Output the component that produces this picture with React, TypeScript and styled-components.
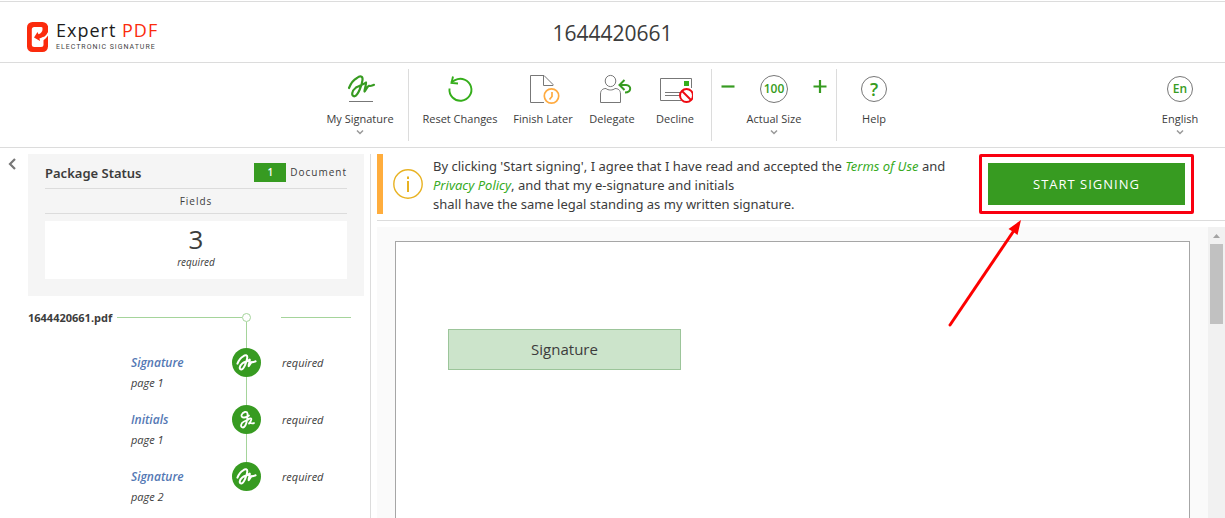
import React from "react";
import styled, { createGlobalStyle } from "styled-components";

const GlobalStyle = createGlobalStyle`
  *, *::before, *::after { box-sizing: border-box; }
  body {
    margin: 0;
    background: #fff;
    color: #3c3c3c;
    font-family: "Open Sans", "Noto Sans", sans-serif;
    font-size: 12px;
  }
  button { font: inherit; color: inherit; border: 0; padding: 0; background: none; cursor: pointer; }
  h1, h2, p, ul { margin: 0; padding: 0; font-weight: 400; }
  ul { list-style: none; }
  svg { display: block; }
`;

const green = "#379b21";
const line = "#dcdcdc";
const rail = "#a5d49b";
const textFont = `"Noto Sans", "Open Sans", sans-serif`;

const Screen = styled.div`
  display: flex;
  flex-direction: column;
  height: 100vh;
  padding-top: 1px;
`;

const Header = styled.header`
  display: grid;
  grid-template-columns: 1fr auto 1fr;
  align-items: center;
  height: 62px;
  flex: none;
  padding: 0 27px;
  border-top: 1px solid ${line};
  border-bottom: 1px solid ${line};
`;

const Title = styled.h1`
  padding-top: 2px;
  font-size: 21px;
  line-height: 28px;
`;

const Brand = styled.a`
  display: flex;
  align-items: center;
  gap: 8px;
  padding-top: 10px;
  color: #1c1c1c;
  text-decoration: none;
`;

const BrandName = styled.span`
  display: block;
  font-size: 18px;
  line-height: 20px;
  letter-spacing: 1px;
`;

const BrandAccent = styled.span`
  color: #fb2b0d;
`;

const BrandTagline = styled.span`
  display: block;
  font: 400 7px/14px Roboto, sans-serif;
  letter-spacing: 1px;
  color: #444;
`;

const Toolbar = styled.nav`
  display: grid;
  grid-template-columns: 1fr auto 1fr;
  height: 85px;
  flex: none;
  border-bottom: 1px solid ${line};
`;

const ToolGroups = styled.div`
  grid-column: 2;
  display: flex;
  padding: 6px 2px 6px 0;
`;

const ToolGroup = styled.div<{ $pad?: number }>`
  display: flex;
  padding: 0 ${(p) => p.$pad ?? 0}px;
  & + & { border-left: 1px solid ${line}; }
`;

const ToolButton = styled.button<{ $width: number }>`
  display: flex;
  flex-direction: column;
  align-items: center;
  justify-content: flex-start;
  width: ${(p) => p.$width}px;
  padding-top: 2px;
`;

const ToolLabel = styled.span`
  margin: 4px 0 1px;
  font-size: 11px;
  line-height: 16px;
  white-space: nowrap;
`;

const LanguageSlot = styled.div`
  justify-self: end;
  display: flex;
  padding: 6px 8px;
`;

const IconBox = styled.span`
  display: flex;
  align-items: center;
  justify-content: center;
  width: 36px;
  height: 36px;
`;

const RoundIcon = styled.span<{ $size: number; $text: number }>`
  display: flex;
  align-items: center;
  justify-content: center;
  width: ${(p) => p.$size}px;
  height: ${(p) => p.$size}px;
  border: 1px solid #777;
  border-radius: 50%;
  color: ${green};
  font-size: ${(p) => p.$text}px;
  line-height: 16px;
  font-weight: 600;
`;

const StepButton = styled.button`
  display: flex;
  align-items: center;
  justify-content: center;
  width: 16px;
  height: 36px;
`;

const Body = styled.div`
  display: flex;
  flex: 1;
  min-height: 0;
  padding-top: 6px;
`;

const Sidebar = styled.aside`
  display: flex;
  flex: none;
  width: 371px;
  padding-right: 6px;
  border-right: 1px solid ${line};
`;

const CollapseButton = styled.button`
  display: flex;
  justify-content: center;
  width: 28px;
  height: 20px;
  padding: 4px 4px 0 0;
`;

const SidebarContent = styled.div`
  flex: 1;
  min-width: 0;
`;

const StatusPanel = styled.section`
  height: 142px;
  padding: 0 17px;
  background: #f5f5f5;
`;

const StatusHead = styled.div`
  display: flex;
  align-items: center;
  height: 35px;
  padding-top: 3px;
  border-bottom: 1px solid ${line};
`;

const StatusTitle = styled.h2`
  flex: 1;
  font-family: ${textFont};
  font-size: 13px;
  line-height: 20px;
  font-weight: 600;
`;

const Count = styled.span`
  width: 32px;
  margin-right: 4px;
  background: ${green};
  color: #fff;
  font-size: 10px;
  line-height: 19px;
  font-weight: 600;
  text-align: center;
`;

const SpacedText = styled.span`
  font-size: 10px;
  line-height: 19px;
  letter-spacing: 1px;
`;

const FieldsHead = styled.div`
  display: flex;
  align-items: center;
  justify-content: center;
  height: 25px;
  border-bottom: 1px solid ${line};
`;

const FieldsCard = styled.div`
  display: flex;
  flex-direction: column;
  align-items: center;
  height: 58px;
  margin-top: 7px;
  padding-top: 1px;
  background: #fff;
`;

const FieldsNumber = styled.span`
  font-size: 26px;
  line-height: 34px;
`;

const FieldsState = styled.em`
  font-size: 10px;
  line-height: 12px;
`;

const Required = styled.em`
  font-size: 11px;
  line-height: 18px;
`;

const FileRow = styled.div`
  display: grid;
  grid-template-columns: 204px 29px 1fr;
  grid-template-rows: 12px auto 22px;
  grid-auto-flow: column;
`;

const FileName = styled.div`
  grid-area: 2 / 1;
  display: flex;
  align-items: center;
  gap: 5px;
  height: 18px;
  font-size: 11px;
  font-weight: 700;
`;

const Rule = styled.span`
  flex: 1;
  height: 1px;
  background: ${rail};
`;

const NodeRail = styled.div`
  grid-area: 2 / 2 / 4 / 2;
  display: grid;
  grid-template-columns: 1fr 9px 1fr;
  grid-template-rows: 5px 9px 1fr;
  align-items: center;
`;

const NodeRule = styled.span`
  grid-area: 2 / 1;
  height: 1px;
  background: ${rail};
`;

const NodeDot = styled.span`
  grid-area: 2 / 2;
  height: 9px;
  border: 1px solid ${rail};
  border-radius: 50%;
`;

const NodeStem = styled.span`
  grid-area: 3 / 2;
  align-self: stretch;
  justify-self: center;
  width: 1px;
  background: ${rail};
`;

const FileTail = styled.div`
  grid-area: 2 / 3;
  display: flex;
  align-items: center;
  height: 18px;
  padding: 0 13px 0 20px;
`;

const FieldRow = styled.li`
  display: grid;
  grid-template-columns: 204px 29px 1fr;
  height: 57px;
`;

const Stem = styled.span`
  display: block;
  width: 1px;
  height: 28px;
  margin: 0 auto;
  background: ${rail};
`;

const FieldInfo = styled.div`
  display: flex;
  flex-direction: column;
  align-items: flex-start;
  gap: 2px;
  padding: 6px 0 0 103px;
  font-size: 11px;
  line-height: 18px;
  font-style: italic;
  white-space: nowrap;
`;

const FieldLink = styled.a`
  color: #5478b4;
  font-size: 12px;
  font-weight: 600;
  text-decoration: none;
`;

const FieldMark = styled.span`
  display: flex;
  align-items: center;
  justify-content: center;
  width: 29px;
  height: 29px;
  border-radius: 50%;
  background: ${green};
  color: #fff;
`;

const FieldState = styled.div`
  padding: 6px 0 0 21px;
`;

const Main = styled.main`
  display: flex;
  flex-direction: column;
  flex: 1;
  min-width: 0;
  padding-left: 6px;
`;

const Notice = styled.section`
  display: flex;
  justify-content: space-between;
  flex: none;
  padding: 0 31px 6px 0;
  border-bottom: 1px solid ${line};
`;

const NoticeMessage = styled.div`
  display: flex;
  align-items: center;
  gap: 10px;
  padding-left: 10px;
  border-left: 6px solid #ffad3d;
`;

const NoticeText = styled.p`
  padding-top: 2px;
  font-family: ${textFont};
  font-size: 13px;
  line-height: 19px;
  white-space: nowrap;
`;

const PolicyLink = styled.a`
  color: #38ab1f;
  font-style: italic;
  text-decoration: none;
`;

const Highlight = styled.div`
  position: relative;
  flex: none;
  padding: 6px;
  border: 3px solid #f90010;
  border-radius: 2px;
`;

const StartButton = styled.button`
  display: block;
  width: 197px;
  height: 42px;
  background: ${green};
  color: #fff;
  font-size: 13px;
  letter-spacing: 1px;
`;

const Pointer = styled.svg`
  position: absolute;
  left: -36px;
  top: 61px;
  pointer-events: none;
`;

const Viewer = styled.section`
  display: flex;
  flex: 1;
  min-height: 0;
  margin-top: 6px;
  background: #fafafa;
`;

const Pages = styled.div`
  flex: 1;
  min-width: 0;
  padding: 14px 18px 0;
  overflow: hidden;
`;

const Page = styled.article`
  min-height: 100vh;
  padding: 87px 52px;
  border: 1px solid #a6a6a6;
  background: #fff;
`;

const SignatureField = styled.button`
  display: block;
  width: 233px;
  height: 41px;
  border: 1px solid #9cc59a;
  background: #cce4cb;
  font-size: 15px;
  line-height: 20px;
  padding-bottom: 2px;
`;

const ScrollTrack = styled.div`
  width: 17px;
  padding: 6px 2px;
  background: #f1f1f1;
`;

const ScrollThumb = styled.div`
  height: 80px;
  margin-top: 6px;
  background: #c1c1c1;
`;

const SIGNATURE =
  "M7 17C9 12 12 8.5 15 7C18 4.5 21 5 20.5 9C20 14 16 24.5 12.5 25.3C9 25.3 9.5 20 14 16.5C17 14.5 21 14 24 11.5C24.5 14 22 19 22.5 20.5C23.5 20 25 15.5 27 14.8C28.5 15.5 29.5 14.8 32 13.8";

const Chevron = () => (
  <svg width="8" height="8" viewBox="0 0 8 8" fill="none" stroke="#999" strokeWidth="1.5">
    <path d="M1 2.500L4 5.500L7 2.500" />
  </svg>
);

const SignatureIcon = () => (
  <svg width="36" height="36" viewBox="0 0 36 36" fill="none">
    <path d={SIGNATURE} stroke={green} strokeWidth="2.2" strokeLinecap="round" strokeLinejoin="round" />
    <path d="M7 30.5H31" stroke="#777" />
  </svg>
);

const ResetIcon = () => (
  <svg width="36" height="36" viewBox="0 0 36 36" fill="none" stroke="#35ae1b" strokeWidth="1.9">
    <path d="M7.500 17.500A11 11 0 1 0 13 9.200L9 11.500" />
    <path d="M11 5.500L9.500 12L16 12.500" />
  </svg>
);

const FinishIcon = () => (
  <svg width="36" height="36" viewBox="0 0 36 36" fill="none" stroke="#777">
    <path d="M19 31.500H5.500V4.500H19L28 13.500V14.500H18.500V4.500" />
    <circle cx="26.500" cy="25" r="7.2" stroke="#ffab40" strokeWidth="1.7" fill="#fff" />
    <path d="M27 21V25.500L24.500 28.500" stroke="#ffab40" strokeWidth="1.7" />
  </svg>
);

const DelegateIcon = () => (
  <svg width="36" height="36" viewBox="0 0 36 36" fill="none" stroke="#777" overflow="visible">
    <ellipse cx="16.500" cy="10" rx="5.3" ry="5.6" />
    <path d="M6.500 31.500V23C6.500 19 9 17.500 12 17.500C14 19.500 19 19.500 21 17.500C24 17.500 26.500 19 26.500 23V31.500Z" />
    <path d="M30.500 9L25.500 14L30.500 19M25.500 14H32C38 14.500 37.500 21.500 31 21.500" stroke={green} strokeWidth="2" />
  </svg>
);

const DeclineIcon = () => (
  <svg width="36" height="36" viewBox="0 0 36 36" fill="none" stroke="#777">
    <path d="M34.500 17V7.500H3.500V29.500H24" />
    <path d="M8 21.500H24M8 24.500H22" />
    <path d="M27 10h5v5h-5z" fill="#35ae1b" stroke="none" />
    <circle cx="29.500" cy="24.500" r="6.5" stroke="#ee0a12" strokeWidth="2" fill="#fff" />
    <path d="M25 20L34 29" stroke="#ee0a12" strokeWidth="2" />
  </svg>
);

const StepIcon = ({ plus }: { plus?: boolean }) => (
  <svg width="14" height="14" viewBox="0 0 14 14" fill="none" stroke={green} strokeWidth="2.2">
    <path d={plus ? "M0.500 6.500H13.500M7 0V13" : "M0.500 6.500H13.500"} />
  </svg>
);

const LogoIcon = () => (
  <svg width="21" height="30" viewBox="0 0 21 30">
    <rect width="21" height="30" rx="5.5" fill="#fb2b0d" />
    <rect x="4.8" y="5" width="11.7" height="20" rx="2.5" fill="#fff" />
    <path d="M21.500 9C19.500 13.500 17 15.500 14 16V19C17.500 18 20 15.500 21.500 12.500Z" fill="#fff" />
    <path d="M15.500 4V7.500C15.500 9.500 14 11.500 11.500 12.300L10.500 10L7 15.500L13 19L12.500 16.300C16.500 15.500 20 13 21 8V4Z" fill="#fb2b0d" />
  </svg>
);

const MarkIcon = ({ initials }: { initials?: boolean }) => (
  <svg
    width="21"
    height="21"
    viewBox={initials ? "0 0 21 21" : "5 1 29 29"}
    fill="none"
    stroke="currentColor"
    strokeLinecap="round"
    strokeLinejoin="round"
  >
    {initials ? (
      <path
        strokeWidth="1.8"
        d="M11.500 4.500C11 2 7 2.500 5.500 6C5 9 9.500 9.500 13 6.500M11.500 4.500C12 10 10 18 7 18.500C4 18.500 4.500 14 8 12.500C10 11.500 12 11 13.500 9.500C16.500 8.500 15.500 12 13 14.500C15 13 16 15.500 18 14"
      />
    ) : (
      <path strokeWidth="2.8" d={SIGNATURE} />
    )}
  </svg>
);

const fields = [
  { name: "Signature", page: "page 1" },
  { name: "Initials", page: "page 1", initials: true },
  { name: "Signature", page: "page 2" },
];

const actions = [
  { label: "Reset Changes", width: 92, icon: <ResetIcon /> },
  { label: "Finish Later", width: 74, icon: <FinishIcon /> },
  { label: "Delegate", width: 64, icon: <DelegateIcon /> },
  { label: "Decline", width: 62, icon: <DeclineIcon /> },
];

export default function App() {
  return (
    <Screen>
      <GlobalStyle />
      <Header>
        <Brand href="#">
          <LogoIcon />
          <span>
            <BrandName>
              Expert <BrandAccent>PDF</BrandAccent>
            </BrandName>
            <BrandTagline>ELECTRONIC SIGNATURE</BrandTagline>
          </span>
        </Brand>
        <Title>1644420661</Title>
      </Header>

      <Toolbar>
        <ToolGroups>
          <ToolGroup>
            <ToolButton $width={96} aria-haspopup="menu">
              <IconBox><SignatureIcon /></IconBox>
              <ToolLabel>My Signature</ToolLabel>
              <Chevron />
            </ToolButton>
          </ToolGroup>
          <ToolGroup $pad={5}>
            {actions.map((a) => (
              <ToolButton key={a.label} $width={a.width}>
                <IconBox>{a.icon}</IconBox>
                <ToolLabel>{a.label}</ToolLabel>
              </ToolButton>
            ))}
          </ToolGroup>
          <ToolGroup $pad={8}>
            <StepButton aria-label="Zoom out"><StepIcon /></StepButton>
            <ToolButton $width={76} aria-haspopup="menu">
              <IconBox><RoundIcon $size={28} $text={12}>100</RoundIcon></IconBox>
              <ToolLabel>Actual Size</ToolLabel>
              <Chevron />
            </ToolButton>
            <StepButton aria-label="Zoom in"><StepIcon plus /></StepButton>
          </ToolGroup>
          <ToolGroup>
            <ToolButton $width={74}>
              <IconBox><RoundIcon $size={26} $text={18}>?</RoundIcon></IconBox>
              <ToolLabel>Help</ToolLabel>
            </ToolButton>
          </ToolGroup>
        </ToolGroups>
        <LanguageSlot>
          <ToolButton $width={74} aria-haspopup="menu">
            <IconBox><RoundIcon $size={26} $text={12}>En</RoundIcon></IconBox>
            <ToolLabel>English</ToolLabel>
            <Chevron />
          </ToolButton>
        </LanguageSlot>
      </Toolbar>

      <Body>
        <Sidebar>
          <CollapseButton aria-label="Collapse sidebar">
            <svg width="8" height="12" viewBox="0 0 8 12" fill="none" stroke="#777" strokeWidth="2.2">
              <path d="M7 1L2 6L7 11" />
            </svg>
          </CollapseButton>
          <SidebarContent>
            <StatusPanel>
              <StatusHead>
                <StatusTitle>Package Status</StatusTitle>
                <Count>1</Count>
                <SpacedText>Document</SpacedText>
              </StatusHead>
              <FieldsHead><SpacedText>Fields</SpacedText></FieldsHead>
              <FieldsCard>
                <FieldsNumber>3</FieldsNumber>
                <FieldsState>required</FieldsState>
              </FieldsCard>
            </StatusPanel>

            <FileRow>
              <FileName>1644420661.pdf<Rule /></FileName>
              <NodeRail>
                <NodeRule />
                <NodeDot />
                <NodeStem />
              </NodeRail>
              <FileTail><Rule /></FileTail>
            </FileRow>
            <ul>
              {fields.map((f, i) => (
                <FieldRow key={i}>
                  <FieldInfo>
                    <FieldLink href="#">{f.name}</FieldLink>
                    <span>{f.page}</span>
                  </FieldInfo>
                  <div>
                    <FieldMark><MarkIcon initials={f.initials} /></FieldMark>
                    {i < fields.length - 1 && <Stem />}
                  </div>
                  <FieldState><Required>required</Required></FieldState>
                </FieldRow>
              ))}
            </ul>
          </SidebarContent>
        </Sidebar>

        <Main>
          <Notice>
            <NoticeMessage>
              <svg width="30" height="30" viewBox="0 0 30 30" fill="none" stroke="#e8b222">
                <circle cx="15" cy="15" r="14.2" strokeWidth="1.4" />
                <path d="M15 12V23M15 7.500V10" strokeWidth="2" />
              </svg>
              <NoticeText>
                By clicking 'Start signing', I agree that I have read and accepted the{" "}
                <PolicyLink href="#">Terms of Use</PolicyLink> and<br />
                <PolicyLink href="#">Privacy Policy</PolicyLink>, and that my e-signature and initials<br />
                shall have the same legal standing as my written signature.
              </NoticeText>
            </NoticeMessage>
            <Highlight>
              <StartButton>START SIGNING</StartButton>
              <Pointer width="80" height="116" viewBox="0 0 80 116">
                <path d="M4 107L67 14" stroke="#fd0000" strokeWidth="3" strokeLinecap="round" />
                <path d="M75 2L71.500 17L67.500 14L62.500 11Z" fill="#fd0000" />
              </Pointer>
            </Highlight>
          </Notice>
          <Viewer>
            <Pages>
              <Page>
                <SignatureField>Signature</SignatureField>
              </Page>
            </Pages>
            <ScrollTrack>
              <svg width="13" height="5" viewBox="0 0 13 5">
                <path d="M3 5L6.500 1L10 5Z" fill="#a3a3a3" />
              </svg>
              <ScrollThumb />
            </ScrollTrack>
          </Viewer>
        </Main>
      </Body>
    </Screen>
  );
}
